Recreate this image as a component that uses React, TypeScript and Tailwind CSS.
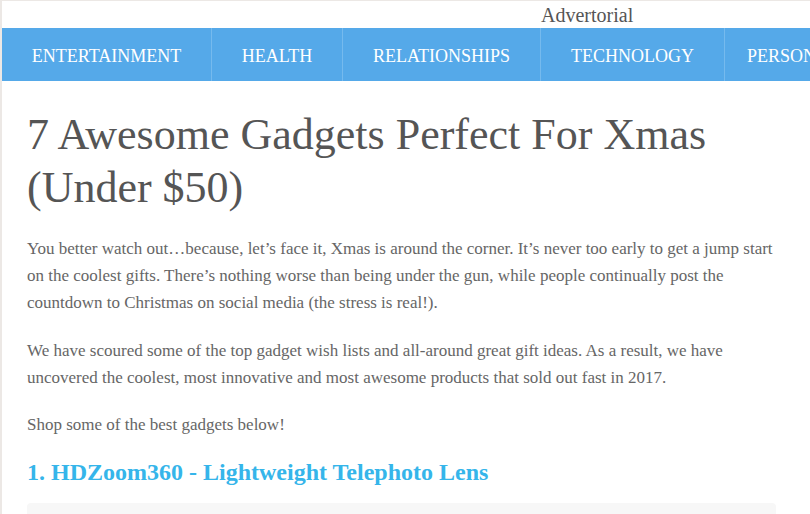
import React from "react";

const navItems = [
  { label: "ENTERTAINMENT", w: "w-[210px]" },
  { label: "HEALTH", w: "w-[131px]" },
  { label: "RELATIONSHIPS", w: "w-[198px]" },
  { label: "TECHNOLOGY", w: "w-[184px]" },
  { label: "PERSONAL FINANCE", w: "w-[220px]" },
];

const App = () => {
  return (
    <div className="w-[810px] h-[514px] overflow-hidden bg-white border-l-2 border-t border-[#ece8e5] font-['Liberation_Serif',serif]">
      {/* top line */}
      <div className="h-[27px] flex items-center pl-[539px]">
        <span className="text-[20px] leading-none text-[#555555]">Advertorial</span>
      </div>

      {/* nav */}
      <div className="h-[53px] bg-[#55a9e9] flex whitespace-nowrap overflow-hidden">
        {navItems.map((item) => (
          <div
            key={item.label}
            className={`${item.w} shrink-0 h-full flex items-center justify-center pt-[3px] border-r border-[#75baee] text-white text-[18px]`}
          >
            {item.label}
          </div>
        ))}
      </div>

      {/* article */}
      <div className="pl-[25px] w-[774px] pt-[27px]">
        <h1 className="text-[44px] leading-[53px] text-[#555555] mb-[21px]">
          7 Awesome Gadgets Perfect For Xmas (Under $50)
        </h1>
        <p className="text-[17px] leading-[27px] text-[#666666] mb-[21px]">
          You better watch out…because, let’s face it, Xmas is around the corner. It’s never too early to get a jump start on the coolest gifts. There’s nothing worse than being under the gun, while people continually post the countdown to Christmas on social media (the stress is real!).
        </p>
        <p className="text-[17px] leading-[27px] text-[#666666] mb-[20px]">
          We have scoured some of the top gadget wish lists and all-around great gift ideas. As a result, we have uncovered the coolest, most innovative and most awesome products that sold out fast in 2017.
        </p>
        <p className="text-[17px] leading-[27px] text-[#666666] mb-[20px]">
          Shop some of the best gadgets below!
        </p>
        <h2 className="text-[24px] leading-[29px] font-bold text-[#35b5ea] mb-[16px]">
          1. HDZoom360 - Lightweight Telephoto Lens
        </h2>
        <div className="h-[60px] bg-[#f7f7f7] rounded-sm" />
      </div>
    </div>
  );
};

export default App;
